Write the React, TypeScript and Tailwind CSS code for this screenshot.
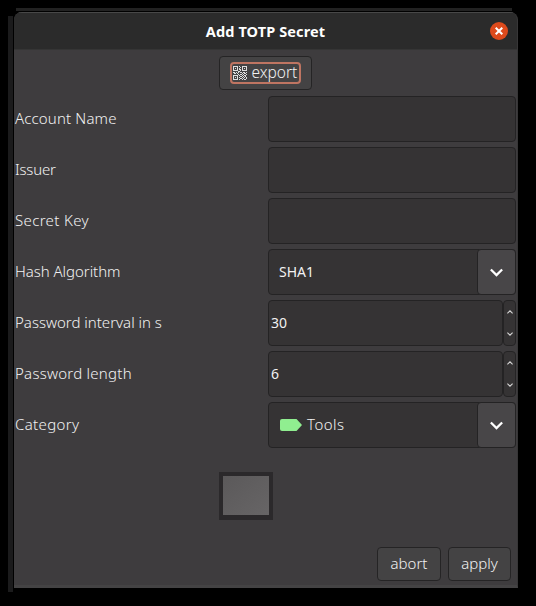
import type { ReactNode } from 'react';

const FONT = "font-['Noto_Sans','Open_Sans',sans-serif]";

function QrIcon() {
  const rows = [
    '11111010011111',
    '10001001010001',
    '10101010010101',
    '10001011010001',
    '11111001011111',
    '00000110000000',
    '11010101101101',
    '01101000010110',
    '00000101101001',
    '11111010010110',
    '10001001101010',
    '10101010010101',
    '10001001101001',
    '11111010010110',
  ];
  return (
    <svg width="14" height="14" viewBox="0 0 14 14" fill="#dedede" shapeRendering="crispEdges" className="shrink-0">
      {rows.flatMap((row, y) =>
        row.split('').map((c, x) => (c === '1' ? <rect key={`${x}-${y}`} x={x} y={y} width="1" height="1" /> : null)),
      )}
    </svg>
  );
}

function Chevron({ up = false, small = false }: { up?: boolean; small?: boolean }) {
  return (
    <svg
      width={small ? 6 : 13}
      height={small ? 4 : 9}
      viewBox="0 0 12 8"
      fill="none"
      stroke={small ? '#d8d8d8' : '#ffffff'}
      strokeWidth="2.1"
      className={up ? 'rotate-180' : ''}
    >
      <path d="M0.8 1.2 L6 6.4 L11.2 1.2" />
    </svg>
  );
}

function Row({ label, spacing, children }: { label: string; spacing: string; children: ReactNode }) {
  return (
    <div className="flex h-[46px]">
      <label className={`flex w-[253px] shrink-0 items-center whitespace-pre pb-[2px] text-[15px] font-light ${spacing}`}>{label}</label>
      {children}
    </div>
  );
}

const FIELD = 'rounded-[4px] border border-[#242324] bg-[#353334]';

function TextField() {
  return <div className={`h-full w-[248px] ${FIELD}`} />;
}

function Combo({ children }: { children: ReactNode }) {
  return (
    <div className={`flex h-full w-[248px] ${FIELD}`}>
      <div className="flex flex-1 items-center pl-[10px]">{children}</div>
      <div className="-my-px -mr-px flex w-[39px] items-center justify-center rounded-[4px] border border-[#242324] bg-[#484648]">
        <Chevron />
      </div>
    </div>
  );
}

function Spinner({ value }: { value: string }) {
  return (
    <div className="flex h-full w-[248px]">
      <div className={`flex w-[235px] items-center pb-[2px] pl-[2px] text-[14px] ${FIELD}`}>{value}</div>
      <div className={`flex w-[13px] flex-col items-center justify-between py-[9px] ${FIELD}`}>
        <Chevron up small />
        <Chevron small />
      </div>
    </div>
  );
}

const BUTTON = 'flex h-[34px] items-center justify-center rounded-[4px] border border-[#252425] bg-[#444344]';

export default function App() {
  return (
    <div className={`relative h-[606px] w-[536px] overflow-hidden bg-black pl-[14px] pt-[12px] text-[#f2f2f2] ${FONT}`}>
      <div className="absolute left-[16px] top-[8px] h-[3px] w-[496px] bg-[#222222]" />
      <div className="absolute left-[8px] top-[16px] h-[576px] w-[5px] bg-[#1b1b1c]" />
      <div className="flex h-[576px] w-[504px] flex-col overflow-hidden rounded-t-[8px] border-b-[3px] border-r border-b-[#444344] border-r-[#373637] bg-[#3e3c3e]">
        <header className="relative flex h-[38px] shrink-0 items-center justify-center border-b border-t border-b-[#353535] border-t-[#484848] bg-[#2b2b2b]">
          <h1 className="pt-[2px] text-[14.5px] font-bold tracking-[0.12px] text-white">Add TOTP Secret</h1>
          <button className="absolute right-[9px] top-[9px] flex size-[18px] items-center justify-center rounded-full bg-[#dd4a1c]">
            <svg width="8" height="8" viewBox="0 0 8 8" stroke="#fff" strokeWidth="2">
              <path d="M0.7 0.7 L7.3 7.3 M7.3 0.7 L0.7 7.3" />
            </svg>
          </button>
        </header>
        <div className="flex justify-center pr-[1px] pt-[6px]">
          <button className={`w-[93px] ${BUTTON}`}>
            <span className="flex h-[22px] w-[71px] items-center gap-[5px] rounded-[4px] border-2 border-[#bf7562] pl-px text-[15.5px] font-light">
              <QrIcon />
              <span>export</span>
            </span>
          </button>
        </div>
        <div className="mt-[6px] flex flex-col gap-[5px] pl-px">
          <Row label="Account Name" spacing="tracking-[0.15px]"><TextField /></Row>
          <Row label="Issuer" spacing="tracking-[-0.2px]"><TextField /></Row>
          <Row label="Secret Key" spacing="tracking-[0.35px]"><TextField /></Row>
          <Row label="Hash Algorithm" spacing="tracking-[-0.05px]">
            <Combo><span className="pb-[2px] text-[14px]">SHA1</span></Combo>
          </Row>
          <Row label="Password interval in s" spacing="tracking-[0]"><Spinner value="30" /></Row>
          <Row label="Password length" spacing="tracking-[0.25px]"><Spinner value="6" /></Row>
          <Row label="Category" spacing="tracking-[0.35px]">
            <Combo>
              <svg width="23" height="12" viewBox="0 0 23 12" fill="#90ee90" className="mr-[4px] ml-px">
                <path d="M2 0 H16.5 L22 6 L16.5 12 H2 Q0 12 0 10 V2 Q0 0 2 0 Z" />
              </svg>
              <span className="pb-[2px] text-[15px] font-light tracking-[0.5px]">Tools</span>
            </Combo>
          </Row>
        </div>
        <div className="ml-[205px] mt-[24px] h-[48px] w-[54px] border-x-4 border-b-[5px] border-t-4 border-[#2b292b] bg-linear-to-br from-[#5b595a] to-[#676566]" />
        <footer className="mt-auto flex justify-end gap-[7px] pb-[4px] pr-[6px]">
          <button className={`w-[64px] pb-[2px] text-[15px] font-light ${BUTTON}`}>abort</button>
          <button className={`w-[63px] pb-[2px] text-[15px] font-light ${BUTTON}`}>apply</button>
        </footer>
      </div>
    </div>
  );
}
